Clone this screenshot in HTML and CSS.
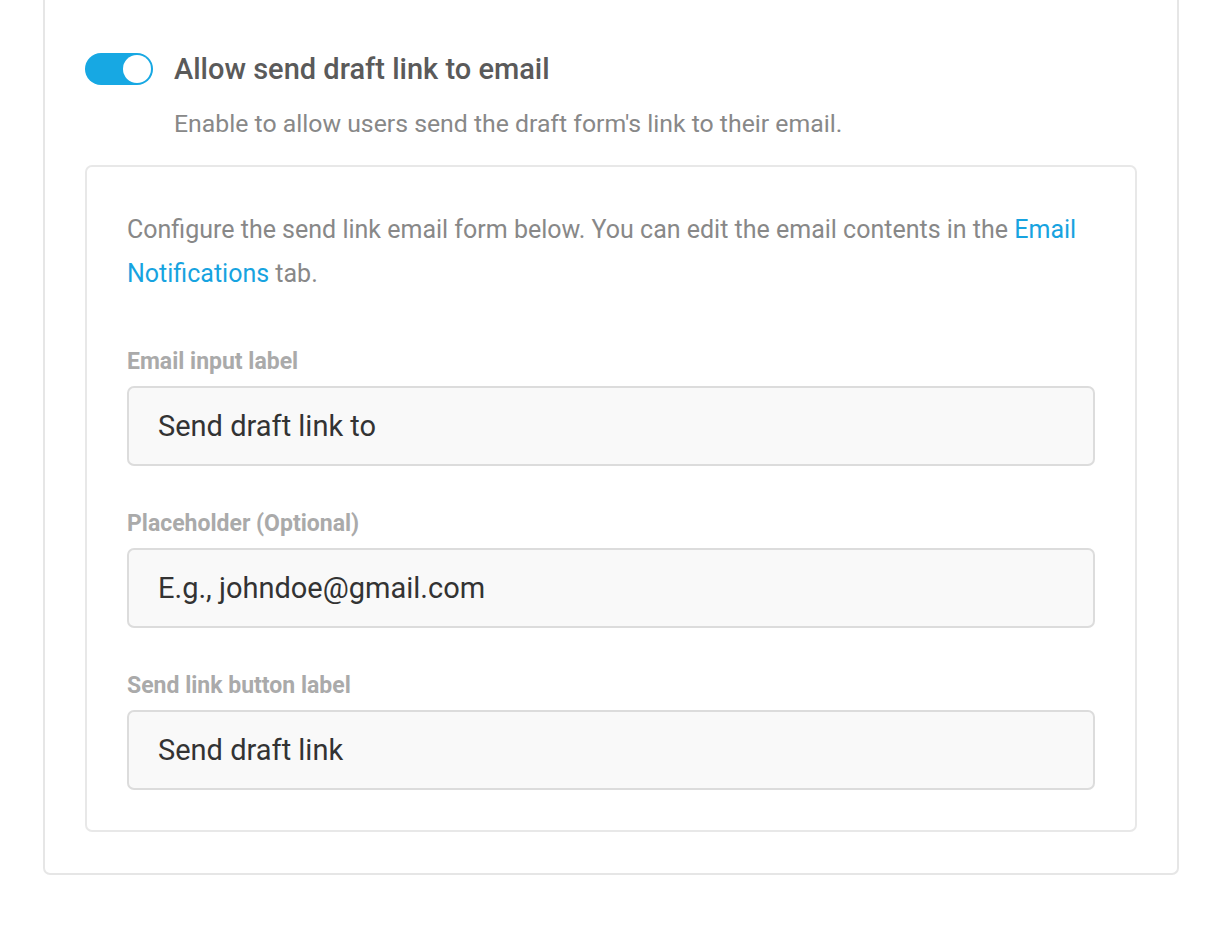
FILE: index.html
```html
<!DOCTYPE html>
<html>
<head>
    <title>Save and Resume</title>
    <link rel="stylesheet" href="styles.css">
</head>
<body>
    <div class="settings-card">
        <div class="setting-row">
            <label class="toggle">
                <input type="checkbox" checked>
                <span class="toggle-track"></span>
            </label>
            <div class="setting-text">
                <h3 class="setting-title">Allow send draft link to email</h3>
                <p class="setting-desc">Enable to allow users send the draft form's link to their email.</p>
            </div>
        </div>

        <div class="sub-box">
            <p class="sub-intro">Configure the send link email form below. You can edit the email contents in the <a href="#">Email Notifications</a> tab.</p>

            <div class="field">
                <label class="field-label">Email input label</label>
                <input class="field-input" type="text" value="Send draft link to">
            </div>

            <div class="field">
                <label class="field-label">Placeholder (Optional)</label>
                <input class="field-input" type="text" value="E.g., johndoe@gmail.com">
            </div>

            <div class="field">
                <label class="field-label">Send link button label</label>
                <input class="field-input" type="text" value="Send draft link">
            </div>
        </div>
    </div>
</body>
</html>
```

FILE: styles.css
```css
* {
    box-sizing: border-box;
}

body {
    margin: 0;
    padding: 0 41px 0 43px;
    font-family: Roboto, "Open Sans", Arial, sans-serif;
    background-color: #fff;
}

.settings-card {
    border: 2px solid #e6e6e6;
    border-top: none;
    border-radius: 0 0 7px 7px;
    padding: 53px 40px 41px 40px;
}

.setting-row {
    display: flex;
    align-items: flex-start;
}

.toggle {
    position: relative;
    display: inline-block;
    width: 68px;
    height: 32px;
    flex-shrink: 0;
    margin-right: 21px;
}

.toggle input {
    display: none;
}

.toggle-track {
    position: absolute;
    inset: 0;
    background-color: #17a8e3;
    border-radius: 16px;
    cursor: pointer;
}

.toggle-track::after {
    content: "";
    position: absolute;
    top: 2px;
    right: 2px;
    width: 28px;
    height: 28px;
    border-radius: 50%;
    background-color: #fff;
}

.setting-title {
    margin: 0;
    font-size: 29px;
    font-weight: 500;
    line-height: 32px;
    color: #5a5a5a;
}

.setting-desc {
    margin: 23px 0 0 0;
    font-size: 24.8px;
    line-height: 32px;
    color: #888;
}

.sub-box {
    margin-top: 25px;
    border: 2px solid #e8e8e8;
    border-radius: 7px;
    padding: 41px 40px 40px 40px;
}

.sub-intro {
    margin: 0;
    font-size: 25px;
    line-height: 44px;
    color: #888;
}

.sub-intro a {
    color: #17a3e0;
    text-decoration: none;
}

.field {
    margin-top: 53px;
}

.field + .field {
    margin-top: 45px;
}

.field-label {
    display: block;
    font-size: 23px;
    font-weight: 700;
    line-height: 26px;
    color: #aaa;
    margin-bottom: 11px;
}

.field-input {
    display: block;
    width: 100%;
    height: 80px;
    padding: 0 29px;
    border: 2px solid #dcdcdc;
    border-radius: 7px;
    background-color: #f9f9f9;
    font-family: Roboto, "Open Sans", Arial, sans-serif;
    font-size: 29px;
    font-weight: 400;
    color: #333;
    outline: none;
}
```
